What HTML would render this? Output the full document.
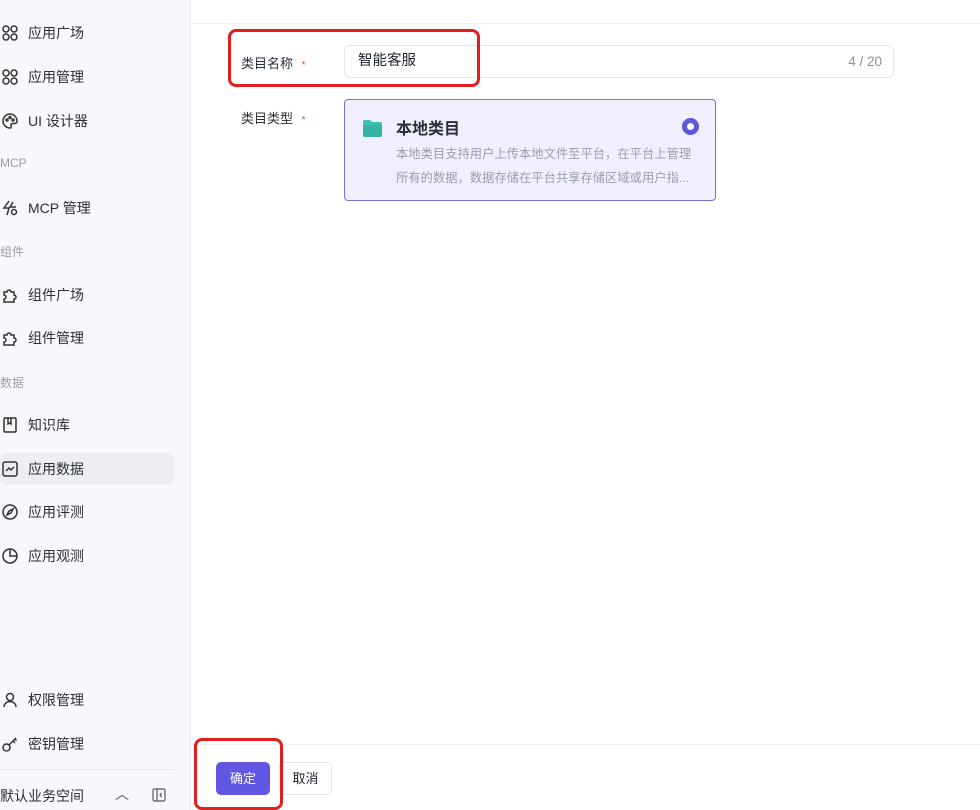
<!DOCTYPE html>
<html><head><meta charset="utf-8"><style>
*{margin:0;padding:0;box-sizing:border-box}
body{width:980px;height:810px;overflow:hidden;background:#fff;font-family:"Liberation Sans","Noto Sans CJK SC",sans-serif;position:relative;color:#1d2129}
.side{position:absolute;left:0;top:0;width:191px;height:810px;background:#f7f8fc;border-right:1px solid #e9eaef}
.it{position:absolute;left:0;height:32px;width:174px;display:flex;align-items:center;font-size:14px;color:#2b2f36}
.it svg{width:18px;height:18px;margin:0 9px 0 1px;flex:none}
.lb{position:absolute;left:0;font-size:12px;color:#9a9ea8}
.act{background:#eceef4;border-radius:6px}
.abs{position:absolute}
</style></head><body>
<div class="side">
<div class="it" style="top:17px"><svg viewBox="0 0 18 18" fill="none" stroke="#333" stroke-width="1.5"><circle cx="5" cy="5" r="3"/><circle cx="13" cy="5" r="3"/><circle cx="5" cy="13" r="3"/><circle cx="13" cy="13" r="3"/></svg>应用广场</div>
<div class="it" style="top:61px"><svg viewBox="0 0 18 18" fill="none" stroke="#333" stroke-width="1.5"><circle cx="5" cy="5" r="3"/><circle cx="13" cy="5" r="3"/><circle cx="5" cy="13" r="3"/><circle cx="13" cy="13" r="3"/></svg>应用管理</div>
<div class="it" style="top:105px"><svg viewBox="0 0 18 18" fill="none" stroke="#333" stroke-width="1.5"><path d="M9 2a7 7 0 1 0 0 14c1.5 0 1.5-1.5 1-2.5s0-2 1.5-2H14a2.5 2.5 0 0 0 2-2.5A7 7 0 0 0 9 2z"/><circle cx="6" cy="8" r="1"/><circle cx="9" cy="5.5" r="1"/><circle cx="12" cy="8" r="1"/></svg>UI 设计器</div>
<div class="lb" style="top:156px">MCP</div>
<div class="it" style="top:192px"><svg viewBox="0 0 18 18" fill="none" stroke="#333" stroke-width="1.5"><path d="M8 2L3 9h5l-2 7M12 3l-3 5h6"/><circle cx="13" cy="13" r="2.5"/></svg>MCP 管理</div>
<div class="lb" style="top:243px">组件</div>
<div class="it" style="top:279px"><svg viewBox="0 0 18 18" fill="none" stroke="#333" stroke-width="1.5"><path d="M3 6h3a2 2 0 1 1 4 0h3v3a2 2 0 1 1 0 4v3H3v-3a2 2 0 1 0 0-4z"/></svg>组件广场</div>
<div class="it" style="top:322px"><svg viewBox="0 0 18 18" fill="none" stroke="#333" stroke-width="1.5"><path d="M3 6h3a2 2 0 1 1 4 0h3v3a2 2 0 1 1 0 4v3H3v-3a2 2 0 1 0 0-4z"/></svg>组件管理</div>
<div class="lb" style="top:374px">数据</div>
<div class="it" style="top:409px"><svg viewBox="0 0 18 18" fill="none" stroke="#333" stroke-width="1.5"><rect x="3" y="2" width="12" height="14" rx="1"/><path d="M7 2v6l1.5-1 1.5 1V2"/></svg>知识库</div>
<div class="it act" style="top:453px"><svg viewBox="0 0 18 18" fill="none" stroke="#333" stroke-width="1.5"><rect x="2" y="2" width="14" height="14" rx="2"/><path d="M5 11l3-3 2 2 3-3"/></svg>应用数据</div>
<div class="it" style="top:496px"><svg viewBox="0 0 18 18" fill="none" stroke="#333" stroke-width="1.5"><circle cx="9" cy="9" r="7"/><path d="M12 6l-2 4-4 2 2-4z"/></svg>应用评测</div>
<div class="it" style="top:540px"><svg viewBox="0 0 18 18" fill="none" stroke="#333" stroke-width="1.5"><circle cx="9" cy="9" r="7"/><path d="M9 2v7h7"/></svg>应用观测</div>
<div class="it" style="top:684px"><svg viewBox="0 0 18 18" fill="none" stroke="#333" stroke-width="1.5"><circle cx="9" cy="6" r="3.5"/><path d="M3 16c0-3.5 3-5.5 6-5.5s6 2 6 5.5"/></svg>权限管理</div>
<div class="it" style="top:728px"><svg viewBox="0 0 18 18" fill="none" stroke="#333" stroke-width="1.5"><circle cx="5.5" cy="12.5" r="3.5"/><path d="M8 10l7-7M12 6l2 2M14 4l1.5 1.5"/></svg>密钥管理</div>
<div class="abs" style="top:769px;left:0;width:174px;border-top:1px solid #e3e5ea"></div>
<div class="abs" style="top:786px;left:0;font-size:14px;color:#2b2f36">默认业务空间</div>
<div class="abs" style="top:784px;left:115px;font-size:14px;color:#555">︿</div>
<svg class="abs" style="top:788px;left:152px" width="14" height="14" viewBox="0 0 14 14" fill="none" stroke="#555" stroke-width="1.2"><rect x="1" y="1" width="12" height="12" rx="1.5"/><path d="M5 1v12M9.5 5L8 7l1.5 2"/></svg>
</div>
<div class="abs" style="left:192px;top:23px;width:788px;border-top:1px solid #eef0f3"></div>
<div class="abs" style="left:241px;top:53px;font-size:13px;color:#2b2f36">类目名称 <span style="color:#e5484d;margin-left:5px;font-size:10px">*</span></div>
<div class="abs" style="left:344px;top:45px;width:550px;height:33px;border:1px solid #e6e8ec;border-radius:6px;font-size:14.5px;line-height:31px;padding-left:13px">智能客服<span style="position:absolute;right:11px;color:#8a8f99;font-size:13.5px">4 / 20</span></div>
<div class="abs" style="left:228px;top:29px;width:252px;height:58px;border:3px solid #e0201e;border-radius:8px"></div>
<div class="abs" style="left:241px;top:108px;font-size:13px;color:#2b2f36">类目类型 <span style="color:#e5484d;margin-left:5px;font-size:10px">*</span></div>
<div class="abs" style="left:344px;top:99px;width:372px;height:102px;border:1px solid #7b6fe0;border-radius:4px;background:#f1effd">
<svg class="abs" style="left:18px;top:20px" width="19" height="17" viewBox="0 0 19 17"><path d="M0 2a2 2 0 0 1 2-2h5l2 2h8a2 2 0 0 1 2 2v11a2 2 0 0 1-2 2H2a2 2 0 0 1-2-2z" fill="#3fc1b0"/><rect x="0" y="5" width="19" height="12" rx="2" fill="#34b2a3"/></svg>
<div class="abs" style="left:51px;top:15px;font-size:16px;font-weight:bold;color:#2b2f36">本地类目</div>
<div class="abs" style="left:337px;top:18px;width:17px;height:17px;border-radius:50%;background:#6156e0"><div style="margin:5px;width:7px;height:7px;border-radius:50%;background:#fff"></div></div>
<div class="abs" style="left:51px;top:42px;width:315px;font-size:12.3px;line-height:24px;color:#9a9ea8;white-space:nowrap">本地类目支持用户上传本地文件至平台，在平台上管理<br>所有的数据，数据存储在平台共享存储区域或用户指...</div>
</div>
<div class="abs" style="left:192px;top:744px;width:788px;border-top:1px solid #eef0f3"></div>
<div class="abs" style="left:216px;top:762px;width:54px;height:33px;border-radius:5px;background:#6257e3;color:#fff;font-size:13px;text-align:center;line-height:33px">确定</div>
<div class="abs" style="left:279px;top:762px;width:53px;height:33px;border-radius:5px;border:1px solid #e3e5ea;font-size:13px;text-align:center;line-height:31px">取消</div>
<div class="abs" style="left:194px;top:738px;width:89px;height:72px;border:3px solid #e0201e;border-radius:8px"></div>
</body></html>
